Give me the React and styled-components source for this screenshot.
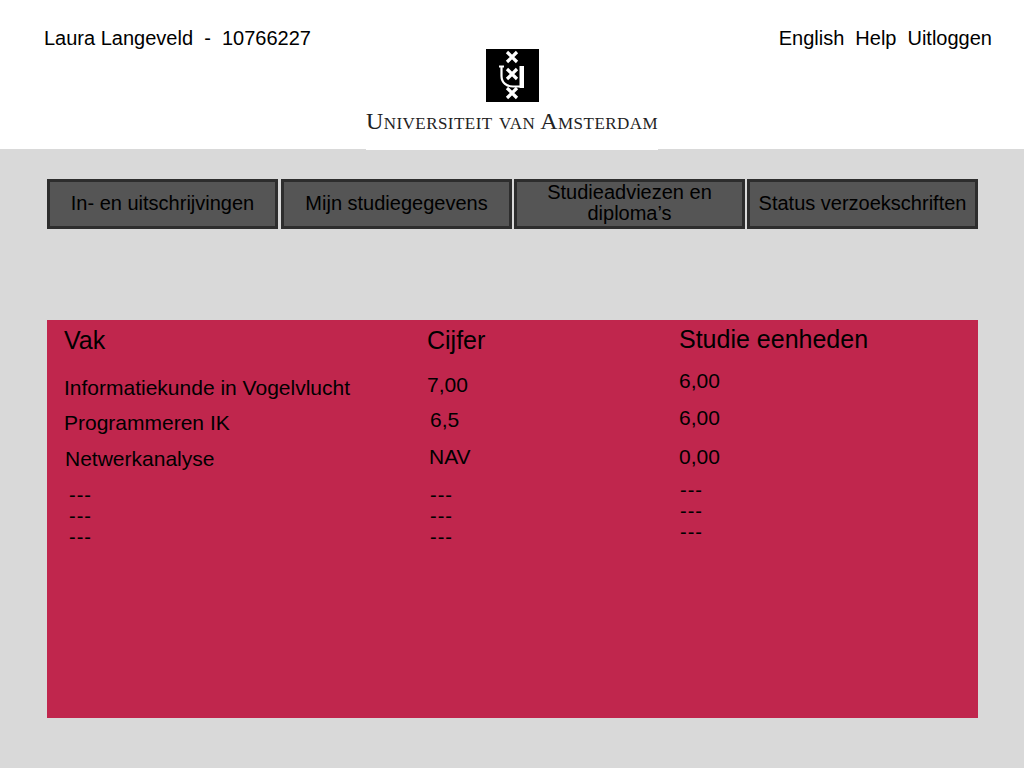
import React from 'react'
import styled, { createGlobalStyle } from 'styled-components'

const GlobalStyle = createGlobalStyle`
  html, body {
    margin: 0;
    padding: 0;
    background: #d9d9d9;
    font-family: "Liberation Sans", Arial, sans-serif;
    color: #000;
  }
`

const Page = styled.div`
  width: 1024px;
  height: 768px;
  overflow: hidden;
`

const Header = styled.header`
  height: 149px;
  background: #fff;
  display: grid;
  grid-template-columns: 322px 292px 1fr;
  padding: 0 32px 0 44px;
  box-sizing: border-box;
`

const UserName = styled.div`
  font-size: 20px;
  line-height: 22px;
  margin-top: 27px;
  white-space: pre;
`

const TopLinks = styled.nav`
  display: flex;
  justify-content: flex-end;
  gap: 11px;
  font-size: 20px;
  line-height: 22px;
  margin-top: 27px;
`

const Brand = styled.div`
  height: 101px;
  background: #fff;
  display: flex;
  flex-direction: column;
  align-items: center;
  padding-top: 49px;
`

const BrandName = styled.div`
  font-family: "Liberation Serif", "Times New Roman", serif;
  font-variant: small-caps;
  font-size: 24px;
  letter-spacing: 0.46px;
  line-height: 26px;
  margin-top: 6px;
  color: #222;
  white-space: nowrap;
`

const Nav = styled.nav`
  display: grid;
  grid-template-columns: 234px 233px 233px 231px;
  width: 931px;
  margin: 30px 0 0 47px;
`

const NavButton = styled.div`
  width: 231px;
  height: 50px;
  box-sizing: border-box;
  border: 3px solid #2d2d2d;
  padding-bottom: 2px;
  background: #555;
  display: flex;
  align-items: center;
  justify-content: center;
  text-align: center;
  font-size: 20px;
  line-height: 21px;
`

const Panel = styled.section`
  width: 931px;
  height: 398px;
  margin: 91px 0 0 47px;
  background: #c0264d;
  display: grid;
  grid-template-columns: 363px 252px 1fr;
  padding-left: 17px;
  box-sizing: border-box;
`

const Column = styled.div`
  display: flex;
  flex-direction: column;
`

const Title = styled.div`
  font-size: 25px;
  line-height: 28px;
  margin-top: ${(p) => p.$top}px;
`

const Cell = styled.div`
  font-size: 21px;
  line-height: 24px;
  margin-top: ${(p) => p.$top}px;
  margin-left: ${(p) => p.$left || 0}px;
`

const DashGroup = styled.div`
  margin-top: ${(p) => p.$top}px;
  margin-left: ${(p) => p.$left}px;
`

const Dash = styled.div`
  font-size: 20px;
  letter-spacing: 1px;
  line-height: 21px;
`

const UvaMark = () => (
  <svg width="53" height="53" viewBox="0 0 53 53">
    <rect width="53" height="53" fill="#000" />
    <g stroke="#fff" strokeWidth="3.2" fill="none">
      <path d="M21 3 L31 13 M31 3 L21 13" />
      <path d="M21 20 L31 30 M31 20 L21 30" />
      <path d="M21 39 L31 49 M31 39 L21 49" />
    </g>
    <path d="M13 17.5 H18 M15.5 17.5 V27 C15.5 34 21 37.5 27 37.5 H35" stroke="#fff" strokeWidth="2.2" fill="none" />
    <rect x="33.5" y="17" width="4.5" height="22" fill="#fff" />
  </svg>
)

const vakken = [
  { text: 'Informatiekunde in Vogelvlucht', top: 22 },
  { text: 'Programmeren IK', top: 11 },
  { text: 'Netwerkanalyse', top: 12, left: 1 },
]

const cijfers = [
  { text: '7,00', top: 19 },
  { text: '6,5', top: 11, left: 3 },
  { text: 'NAV', top: 13, left: 2 },
]

const eenheden = [
  { text: '6,00', top: 16 },
  { text: '6,00', top: 13 },
  { text: '0,00', top: 15 },
]

const DataColumn = ({ title, titleTop, rows, dashTop, dashLeft }) => (
  <Column>
    <Title $top={titleTop}>{title}</Title>
    {rows.map((row, i) => (
      <Cell key={i} $top={row.top} $left={row.left}>{row.text}</Cell>
    ))}
    <DashGroup $top={dashTop} $left={dashLeft}>
      <Dash>---</Dash>
      <Dash>---</Dash>
      <Dash>---</Dash>
    </DashGroup>
  </Column>
)

const App = () => {
  return (
    <Page>
      <GlobalStyle />
      <Header>
        <UserName>Laura Langeveld  -  10766227</UserName>
        <Brand>
          <UvaMark />
          <BrandName>Universiteit van Amsterdam</BrandName>
        </Brand>
        <TopLinks>
          <span>English</span>
          <span>Help</span>
          <span>Uitloggen</span>
        </TopLinks>
      </Header>
      <Nav>
        <NavButton>In- en uitschrijvingen</NavButton>
        <NavButton>Mijn studiegegevens</NavButton>
        <NavButton>Studieadviezen en diploma’s</NavButton>
        <NavButton>Status verzoekschriften</NavButton>
      </Nav>
      <Panel>
        <DataColumn title="Vak" titleTop={6} rows={vakken} dashTop={14} dashLeft={5} />
        <DataColumn title="Cijfer" titleTop={6} rows={cijfers} dashTop={16} dashLeft={3} />
        <DataColumn title="Studie eenheden" titleTop={5} rows={eenheden} dashTop={11} dashLeft={1} />
      </Panel>
    </Page>
  )
}

export default App
